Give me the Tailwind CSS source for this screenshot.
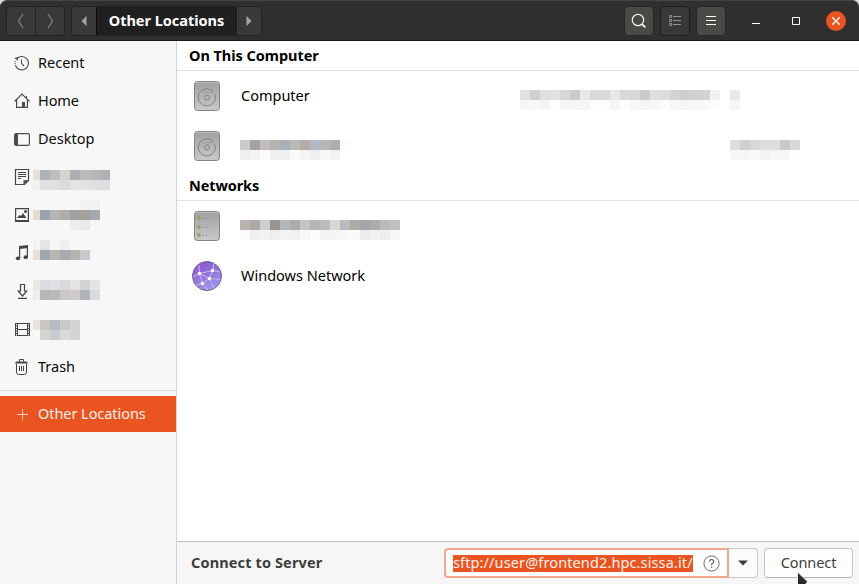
<!DOCTYPE html>
<html lang="en">
<head>
<meta charset="utf-8">
<title>Other Locations</title>
<script src="https://cdn.jsdelivr.net/npm/@tailwindcss/browser@4"></script>
</head>
<body class="bg-[#d8dade] w-[859px] h-[584px] overflow-hidden text-black text-[14.5px] leading-[20px] font-['Noto_Sans',sans-serif] whitespace-nowrap">
<div class="flex flex-col h-[584px]">
  <header class="flex items-center h-[41px] shrink-0 rounded-t-[7px] bg-[#302e2f] border-t border-t-[#454344] border-b border-b-[#1a1819] px-[6px]">
    <div class="flex w-[59px] h-[30px] rounded-[4px] border border-[#232122] bg-[#3a3939]">
      <div class="w-[29px] border-r border-[#232122] flex items-center justify-center"><svg width="8" height="16" viewBox="0 0 8 16" fill="none" stroke="#8b8a8a" stroke-width="1.1"><path d="M6 1L1.500 8L6 15"/></svg></div>
      <div class="flex-1 flex items-center justify-center"><svg width="8" height="16" viewBox="0 0 8 16" fill="none" stroke="#8b8a8a" stroke-width="1.1"><path d="M2 1L6.500 8L2 15"/></svg></div>
    </div>
    <div class="flex ml-[6px] w-[191px] h-[30px] rounded-[4px] border border-[#232122] bg-[#3a3939]">
      <div class="w-[24px] flex items-center justify-center"><svg width="6" height="10" viewBox="0 0 6 10"><path d="M5.500 0V10L.5 5Z" fill="#a5a4a4"/></svg></div>
      <div class="w-[141px] bg-[#212020] border-l border-[#0c0b0c] flex items-center justify-center text-white font-bold"><span class="pb-[2px] pr-px tracking-[-0.02px]">Other Locations</span></div>
      <div class="flex-1 flex items-center justify-center"><svg width="6" height="10" viewBox="0 0 6 10"><path d="M.5 0V10L5.500 5Z" fill="#a5a4a4"/></svg></div>
    </div>
    <div class="ml-auto flex gap-[6px]">
      <div class="w-[30px] h-[30px] rounded-[4px] border border-[#272526] bg-[#4a4946] flex items-center justify-center"><svg width="16" height="16" viewBox="0 0 16 16" fill="none" stroke="#f2f2f2"><circle cx="7" cy="7" r="5.700" stroke-width="1.200"/><path d="M11 11L14.300 14.300" stroke-width="1.800"/></svg></div>
      <div class="w-[30px] h-[30px] rounded-[4px] border border-[#1d1b1c] bg-[#393838] flex items-center justify-center"><svg width="14" height="12" viewBox="0 0 14 12" fill="none" stroke="#929191"><path d="M1.500.5h2v2h-2zM1.500 4.500h2v2h-2zM1.500 8.500h2v2h-2zM5 1.500h8M5 5.500h8M5 9.500h8"/></svg></div>
      <div class="w-[30px] h-[30px] rounded-[4px] border border-[#272526] bg-[#4a4946] flex items-center justify-center"><svg width="12" height="10" viewBox="0 0 12 10" fill="#fff"><path d="M1 0h10v1H1zM1 4h10v1H1zM1 8h10v1H1z"/></svg></div>
    </div>
    <svg class="ml-[26px]" width="8" height="10" viewBox="0 0 8 10"><path d="M0 7h8v1H0z" fill="#fff"/></svg>
    <svg class="ml-[32px]" width="8" height="8" viewBox="0 0 8 8"><path d="M.5.5h7v7h-7z" fill="none" stroke="#fff"/></svg>
    <svg class="ml-[26px] mr-[7px]" width="20" height="20" viewBox="0 0 20 20"><circle cx="10" cy="10" r="10" fill="#e95420"/><path d="M6.200 6.200L13.800 13.800M13.800 6.200L6.200 13.800" stroke="#fff" stroke-width="1.300"/></svg>
  </header>

  <div class="flex flex-1 min-h-0">
    <aside class="w-[177px] shrink-0 bg-[#f7f7f7] border-r border-[#d3d3d3] pt-[3px] text-[#0a0a0a]">
      <div class="h-[38px] pl-[14px] flex items-center gap-[8px]"><svg width="16" height="16" viewBox="0 0 16 16" fill="none" stroke="#4d4d4d" stroke-width="1.100"><path d="M3 3.500A6.700 6.700 0 1 1 1.300 9.800"/><path d="M1 6v3.500" stroke-dasharray="1 1"/><path d="M7.500 4.500v4l2.500 2.500"/><path d="M.2 3l3.800-.8v3.600z" fill="#4d4d4d" stroke="none"/></svg><span class="pb-[2px]">Recent</span></div>
      <div class="h-[38px] pl-[14px] flex items-center gap-[8px]"><svg width="16" height="16" viewBox="0 0 16 16" fill="none" stroke="#4d4d4d" stroke-width="1.200"><path d="M.5 8.500L8 1l7.500 7.500M2.600 7v7.400h10.800V7"/><path d="M12.500 3v2.500" stroke-width="1"/><path d="M8 9h3v5H8z" fill="#4d4d4d" stroke="none"/></svg><span class="pb-[2px] tracking-[-0.1px]">Home</span></div>
      <div class="h-[38px] pl-[14px] flex items-center gap-[8px]"><svg width="16" height="16" viewBox="0 0 16 16"><rect x=".6" y="2.600" width="14.800" height="11.800" rx="1.500" fill="none" stroke="#4d4d4d" stroke-width="1.200"/><path d="M1 3h3v11H1z" fill="#4d4d4d"/></svg><span class="pb-[2px]">Desktop</span></div>
      <div class="h-[38px] pl-[14px] flex"><svg class="mt-[11px]" width="16" height="16" viewBox="0 0 16 16"><path d="M1.500.5h13v11l-4 4h-9z" fill="none" stroke="#454545" stroke-width="1.200"/><path d="M4 3.500h8M4 5.500h8M4 7.500h8M4 9.500h3" stroke="#454545"/><path d="M9.500 15.500v-4.300h5z" fill="#454545"/></svg>
        <div class="ml-[3px] mt-[12px]" data-mosaic="e9e1d7 b1b2b6 bbbfc3 d5d5d0 aeafb5 bdbbb9 b9b7b4 aeb1b5/f3f1ee dfe1e1 dfe0e0 dbdbdc e1e3e5 e3e2e1 e0e0e0 dcdfe1"></div></div>
      <div class="h-[38px] pl-[14px] flex"><svg class="mt-[11px]" width="16" height="16" viewBox="0 0 16 16"><path d="M1.600 1.600h12.800v12H1.600z" fill="none" stroke="#454545" stroke-width="1.200"/><path d="M1 13h14v2H1zM3 11l2.500-3 1.500 1L9 6l3.500 5z" fill="#454545"/><circle cx="11.500" cy="4.500" r="1.500" fill="#454545"/></svg>
        <div class="ml-[3px] mt-[4px]" data-mosaic="- - - - - f2f2f2 f2f2f2/e7dace 9ba3ad b5b5b6 b1aca8 a0a0a2 a4a19b a4a9b3/- - - - eeecea e8e9eb"></div></div>
      <div class="h-[38px] pl-[14px] flex"><svg class="mt-[11px]" width="16" height="16" viewBox="0 0 16 16" fill="#454545"><path d="M5 1l9-1v3L5.800 4z"/><path d="M5 1h1.200v12H5zM12.800 1H14v11h-1.200z"/><ellipse cx="4" cy="13.300" rx="2.200" ry="1.900"/><ellipse cx="11.800" cy="12.200" rx="2.200" ry="1.900"/></svg>
        <div class="ml-[3px] mt-[6px]" data-mosaic="f4f4f3 e3e6e8 - eeeff0/eadfd6 9fa7b1 b7b6b2 a9aab1 b6b2af c6cacd"></div></div>
      <div class="h-[38px] pl-[14px] flex"><svg class="mt-[11px]" width="16" height="16" viewBox="0 0 16 16" fill="none" stroke="#454545" stroke-width="1.200"><path d="M6.500 1.500h4v6.500h2.200L8.500 13 4.300 8h2.200zM4 15.400h9"/></svg>
        <div class="ml-[3px] mt-[8px]" data-mosaic="ebe8e1 dadcde dee0e3 d8d8d8 e4e3e1 d3d3d3 e2e4e7/efeeec b7b7b8 bababa c9c9c9 cfcac7 b0b5b9 dadbdd"></div></div>
      <div class="h-[38px] pl-[14px] flex"><svg class="mt-[11px]" width="16" height="16" viewBox="0 0 16 16" fill="none" stroke="#454545"><path d="M3 2.500h11M4 8.500h9M3 14.500h11M3.500 2v13M13.500 2v13M1.500 2v13M15.500 2v13"/><path d="M2.500 2v13M14.500 2v13" stroke-dasharray="1 1.500"/></svg>
        <div class="ml-[3px] mt-[10px]" data-mosaic="eae4e0 c9c7c5 b5bcc3 cacbc9 d3d4d6/- d6d2cc c8ccd1 dadad8 d3d4d7"></div></div>
      <div class="h-[38px] pl-[14px] flex items-center gap-[8px]"><svg width="16" height="16" viewBox="0 0 16 16" fill="none" stroke="#454545"><path d="M2.500 5v8q0 2.500 2 2.500h6q2 0 2-2.500V5M5.500 7v5M7.500 7v5M9.500 7v5"/><path d="M1 4.500q0-2 2-2h9q2 0 2 2z" fill="#454545" stroke="none"/><path d="M5.500 2.500v-2h4v2"/></svg><span class="pb-[2px]">Trash</span></div>
      <div class="mt-[4px] h-px bg-[#dadada]"></div>
      <div class="mt-[5px] h-[36px] pl-[14px] flex items-center gap-[8px] bg-[#e95420] text-[#fff1eb]"><svg width="16" height="16" viewBox="0 0 16 16"><path d="M3 8.500h11M8.500 3v11" stroke="#f9cdbd"/></svg><span class="pb-[2px] tracking-[-0.06px]">Other Locations</span></div>
    </aside>

    <main class="flex-1 min-w-0 flex flex-col bg-white">
      <h2 class="h-[30px] border-b border-[#e3e3e3] pl-[12px] flex items-center font-bold"><span class="pb-[2px] tracking-[-0.04px]">On This Computer</span></h2>
      <div class="h-[50px] pl-[15px] flex items-center">
        <svg width="30" height="32" viewBox="0 0 30 32"><defs><linearGradient id="g" x2="0" y2="1"><stop stop-color="#a0a0a0"/><stop offset="1" stop-color="#c8c8c8"/></linearGradient></defs><rect x="2.500" y="1.500" width="25" height="29" rx="3" fill="url(#g)" stroke="#858585"/><path d="M4 2.500h22" stroke="#bbb"/><g fill="none" stroke="#828282"><path d="M20.800 11.200A8.500 8.500 0 1 0 22.800 14.200"/><path d="M20.800 11.200L18.300 13"/><path d="M17.500 12.700A5.300 5.300 0 0 0 11 14" stroke-opacity=".5"/><circle cx="15" cy="17.500" r="2.500"/></g></svg>
        <span class="ml-[19px] w-[279px] pb-[2px]">Computer</span>
        <div class="self-start mt-[19px]" data-mosaic="e1e1e1 d0d0d0 dfdfdf e1e1e1 d6d6d6 cacaca e9e9e9 d9d9d9 d9d9d9 e6e6e6 d9d9d9 d7d7d7 cacaca dedede dcdcdc d3d3d3 cecece d1d1d1 d2d2d2 f2f2f2 - e9e9e9/f6f6f6 f8f8f8 f3f3f3 fdfdfd f6f6f6 f5f5f5 f5f5f5 fdfdfd fdfdfd f6f6f6 fdfdfd f7f7f7 f5f5f5 f6f6f6 fcfcfc f7f7f7 f5f5f5 f7f7f7 f8f8f8 fcfcfc - f6f6f6"></div>
      </div>
      <div class="h-[50px] pl-[15px] flex items-center">
        <svg width="30" height="32" viewBox="0 0 30 32"><rect x="2.500" y="1.500" width="25" height="29" rx="3" fill="url(#g)" stroke="#858585"/><path d="M4 2.500h22" stroke="#bbb"/><g fill="none" stroke="#828282"><path d="M20.800 11.200A8.500 8.500 0 1 0 22.800 14.200"/><path d="M20.800 11.200L18.300 13"/><path d="M17.500 12.700A5.300 5.300 0 0 0 11 14" stroke-opacity=".5"/><circle cx="15" cy="17.500" r="2.500"/></g></svg>
        <div class="self-start mt-[19px] ml-[18px] w-[490px]" data-mosaic="cacac8 a4a2a4 c1bdba b5b3b0 a8b0b9 bab9b5 b5aca7 b1b9c5 b6b6b4 aeaeb0 fbfcfd/efefef f3f3f3 fafafa f0f0f0 eff1f0 f9f9f8 f4f3f2 eff1f1 f7f7f6 f2f2f2"></div>
        <div class="self-start mt-[19px]" data-mosaic="dddddd d0d0d0 d8d8d8 dedede dedede cacaca d9d9d9/f6f6f6 f6f6f6 f9f9f9 f3f3f3 f6f6f6 f6f6f6 fdfdfd"></div>
      </div>
      <h2 class="h-[30px] border-b border-[#e3e3e3] pl-[12px] flex items-center font-bold"><span class="pb-[2px] tracking-[-0.1px]">Networks</span></h2>
      <div class="h-[50px] pl-[15px] flex items-center">
        <svg width="30" height="32" viewBox="0 0 30 32"><rect x="2.500" y="1.500" width="25" height="29" rx="3" fill="url(#g)" stroke="#858585"/><path d="M4 2.500h22" stroke="#bbb"/><g fill="#8fb85a" stroke="#8a9679" stroke-width=".8"><circle cx="7" cy="8" r="1.500"/><circle cx="7" cy="17" r="1.500"/><circle cx="7" cy="25" r="1.500"/></g><path d="M11 8.500h1M14 8.500h1M11 17.500h1M14 17.500h1M11 25.500h1M14 25.500h1" stroke="#858585"/></svg>
        <div class="self-start mt-[19px] ml-[18px]" data-mosaic="b8b3b0 ada9a6 c9cfd3 999490 b3b8bc adacaa c5c5c5 b5b6b9 bdbdbe d8d8d1 b9bac1 acaba6 a5a6ac acacaa bababb bfc0c2/fafbfb efefed f0f2f4 edeff2 f4f3f2 f0f2f2 f7f7f7 fbfbfb f4f4f4 f5f5f4 f7f7f7 fafafa ececec f2f1ef ebedf0 f6f6f6"></div>
      </div>
      <div class="h-[50px] pl-[15px] flex items-center">
        <svg width="30" height="32" viewBox="0 0 30 32"><defs><linearGradient id="p" x1=".3" x2=".7" y2="1"><stop stop-color="#8c55cf"/><stop offset="1" stop-color="#9d9cee"/></linearGradient></defs><circle cx="15" cy="16" r="14.500" fill="url(#p)" stroke="#696580"/><g fill="none" stroke="#cbb6f0" stroke-width="1"><path d="M7.500 13.500L20.500 10.500L17.500 18.500L10.500 23.500L7.500 13.500L17.500 18.500L28.500 19.500M20.500 10.500L22 3M20.500 10.500L28 12M7.500 13.500L7 5M7.500 13.500L1 17M10.500 23.500L4 25M10.500 23.500L16 30M17.500 18.500L22 28"/></g><g fill="#fff"><circle cx="7.500" cy="13.500" r="1.700"/><circle cx="20.500" cy="10.500" r="1.700"/><circle cx="17.500" cy="18.500" r="1.700"/><circle cx="10.500" cy="23.500" r="1.700"/></g></svg>
        <span class="ml-[19px] pb-[2px]">Windows Network</span>
      </div>
      <footer class="mt-auto h-[43px] shrink-0 flex items-center bg-[#f6f6f6] border-t border-[#c0c0c0] pl-[14px] pr-[6px] text-[#3d3d3d]">
        <span class="font-bold pb-[2px] tracking-[0.13px]">Connect to Server</span>
        <div class="ml-auto flex">
          <div class="w-[285px] h-[30px] rounded-l-[4px] border-2 border-[#f4a68d] bg-white flex items-center pl-[7px]">
            <span class="bg-[#e95420] text-[#fff1eb] w-[240px] h-[17px] leading-[14px] tracking-[0.12px]">sftp://user@frontend2.hpc.sissa.it/</span>
            <svg class="ml-auto mr-[7px]" width="17" height="17" viewBox="0 0 17 17" fill="none"><circle cx="8.500" cy="8.500" r="7.600" stroke="#6a6a6a"/><path d="M6.200 6.500Q6.500 4.500 8.500 4.500T10.800 6.500Q10.800 7.600 9.300 8.500Q8.500 9 8.500 10.200" stroke="#555" stroke-width="1.100"/><path d="M8 11.500h1.200v1.200H8z" fill="#555"/></svg>
          </div>
          <div class="w-[29px] h-[30px] rounded-r-[4px] border border-l-0 border-[#c8c8c8] bg-[#fbfbfb] flex items-center justify-center"><svg width="10" height="6" viewBox="0 0 10 6"><path d="M0 .5h10L5 5.500z" fill="#3d3d3d"/></svg></div>
        </div>
        <div class="relative ml-[6px] w-[89px] h-[30px] rounded-[4px] border border-[#c5c5c5] border-b-[#b5b5b5] bg-[#fdfdfd] flex items-center justify-center"><span class="pb-[2px] tracking-[-0.1px]">Connect</span>
          <svg class="absolute left-[31px] top-[23px]" width="14" height="16" viewBox="0 0 14 16"><path d="M1.500 0v16h10.500l-2-5L12 10z" fill="#2b2b2b" stroke="#fff" stroke-width=".8"/></svg>
        </div>
      </footer>
    </main>
  </div>
</div>
<script>
document.querySelectorAll('[data-mosaic]').forEach(el => {
  const narrow = el.closest('aside');
  el.dataset.mosaic.split('/').forEach(line => {
    const row = document.createElement('div');
    row.className = 'flex h-[10px]';
    line.split(' ').forEach((c, i) => {
      const cell = document.createElement('div');
      cell.className = narrow && i === 0 ? 'w-[7px] h-[10px]' : 'w-[10px] h-[10px]';
      if (c !== '-') cell.style.backgroundColor = '#' + c;
      row.append(cell);
    });
    el.append(row);
  });
});
</script>
</body>
</html>
